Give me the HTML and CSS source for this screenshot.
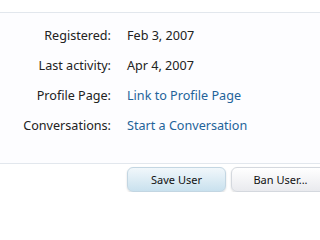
FILE: index.html
```html
<!DOCTYPE html>
<html>
<head>
<meta charset="utf-8">
<link rel="stylesheet" href="styles.css">
</head>
<body>
<div class="top"></div>
<div class="form">
  <dl class="rows">
    <dt>Registered:</dt><dd>Feb 3, 2007</dd>
    <dt>Last activity:</dt><dd>Apr 4, 2007</dd>
    <dt>Profile Page:</dt><dd><a href="#">Link to Profile Page</a></dd>
    <dt>Conversations:</dt><dd><a href="#">Start a Conversation</a></dd>
  </dl>
</div>
<div class="buttons">
  <button class="btn primary">Save User</button>
  <button class="btn">Ban User...</button>
</div>
</body>
</html>
```
FILE: styles.css
```css
html, body {
  margin: 0;
  padding: 0;
  background: #ffffff;
  font-family: "Noto Sans", "Open Sans", sans-serif;
  font-size: 12.6px;
  color: #222222;
  overflow: hidden;
}
.top {
  height: 12px;
  border-bottom: 1px solid #e2e7ed;
}
.form {
  background: #fdfdff;
  padding: 7px 0 23px;
  border-bottom: 1px solid #e2e7ed;
}
.rows {
  display: grid;
  grid-template-columns: 111px 1fr;
  column-gap: 16px;
  grid-auto-rows: 30px;
  margin: 0;
  align-items: center;
}
.rows dt {
  text-align: right;
  color: #222222;
}
.rows dd {
  margin: 0;
  color: #222222;
}
.rows a {
  color: #23639a;
  text-decoration: none;
}
.buttons {
  display: flex;
  gap: 5px;
  padding: 3px 0 0 127px;
}
.btn {
  flex: none;
  height: 25px;
  width: 99px;
  border: 1px solid #d4d8de;
  border-radius: 6px;
  background: linear-gradient(#ffffff, #e9eaee);
  box-shadow: 0 1px 2px rgba(0,0,0,0.15);
  font-family: "Noto Sans", "Open Sans", sans-serif;
  font-size: 11px;
  color: #111111;
  padding: 0;
}
.btn.primary {
  background: linear-gradient(#f1f7fb, #c9e1ee);
  border-color: #c3d6e2;
}
```
